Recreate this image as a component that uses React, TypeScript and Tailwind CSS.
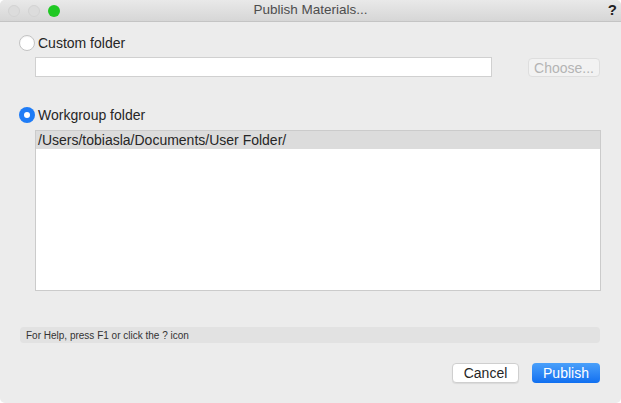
import React from "react";

const font = { fontFamily: '"Liberation Sans", Arial, sans-serif' };

const Radio: React.FC<{ checked?: boolean }> = ({ checked }) =>
  checked ? (
    <span className="flex h-4 w-4 items-center justify-center rounded-full bg-[#1f7cf6]">
      <span className="h-[6px] w-[6px] rounded-full bg-white" />
    </span>
  ) : (
    <span className="h-4 w-4 rounded-full border border-[#c3c3c3] bg-white shadow-[inset_0_1px_1px_rgba(0,0,0,0.05)]" />
  );

export default function App() {
  return (
    <div
      className="flex h-[403px] w-[621px] flex-col overflow-hidden rounded-[5px] bg-[#ececec] text-[#262626]"
      style={font}
    >
      {/* Title bar */}
      <div className="relative flex h-[22px] shrink-0 items-center border-b border-[#c4c4c4] bg-gradient-to-b from-[#e9e9e9] to-[#d6d6d6]">
        <div className="flex gap-[8px] pl-[8px]">
          <span className="h-3 w-3 rounded-full border border-[#d2d2d2] bg-[#dcdcdc]" />
          <span className="h-3 w-3 rounded-full border border-[#d2d2d2] bg-[#dcdcdc]" />
          <span className="h-3 w-3 rounded-full bg-[#1fc823]" />
        </div>
        <div className="absolute inset-0 flex items-center justify-center text-[13.5px] text-[#4d4d4d]">
          Publish Materials...
        </div>
        <div className="absolute right-[4px] top-0 flex h-[21px] items-center text-[15px] font-bold text-[#222]">
          ?
        </div>
      </div>

      {/* Custom folder */}
      <div className="mt-[13px] flex items-center gap-[3px] pl-[19px]">
        <Radio />
        <span className="text-[14px] leading-4">Custom folder</span>
      </div>
      <div className="mt-[6px] flex items-start pl-[35px]">
        <div className="h-[20px] w-[457px] border border-[#d0d0d0] bg-white" />
        <button className="ml-[36px] mt-[1px] h-[19px] w-[72px] rounded-[4px] border border-[#dedede] bg-[#f2f2f2] text-[14px] leading-none text-[#b4b4b4]">
          Choose...
        </button>
      </div>

      {/* Workgroup folder */}
      <div className="mt-[30px] flex items-center gap-[3px] pl-[19px]">
        <Radio checked />
        <span className="text-[14px] leading-4">Workgroup folder</span>
      </div>
      <div className="ml-[35px] mt-[7px] flex h-[161px] w-[566px] flex-col border border-[#cbcbcb] bg-white">
        <div className="flex h-[18px] items-center bg-[#dcdcdc] pl-[2px] pt-[1px] text-[14px]">
          /Users/tobiasla/Documents/User Folder/
        </div>
      </div>

      {/* Help */}
      <div className="ml-[20px] mt-[36px] flex h-[16px] w-[580px] items-center rounded-[4px] bg-[#e2e2e2] pl-[6px] pt-[1px] text-[10px] text-[#333]">
        For Help, press F1 or click the ? icon
      </div>

      {/* Buttons */}
      <div className="mt-[20px] flex justify-end gap-[13px] pr-[21px]">
        <button className="h-[20px] w-[67px] rounded-[4px] border border-[#cfcfcf] bg-white text-[14px] leading-none shadow-[0_1px_1px_rgba(0,0,0,0.08)]">
          Cancel
        </button>
        <button className="h-[20px] w-[68px] rounded-[4px] bg-gradient-to-b from-[#4aa0fa] to-[#0f6ff0] text-[14px] leading-none text-white">
          Publish
        </button>
      </div>
    </div>
  );
}
